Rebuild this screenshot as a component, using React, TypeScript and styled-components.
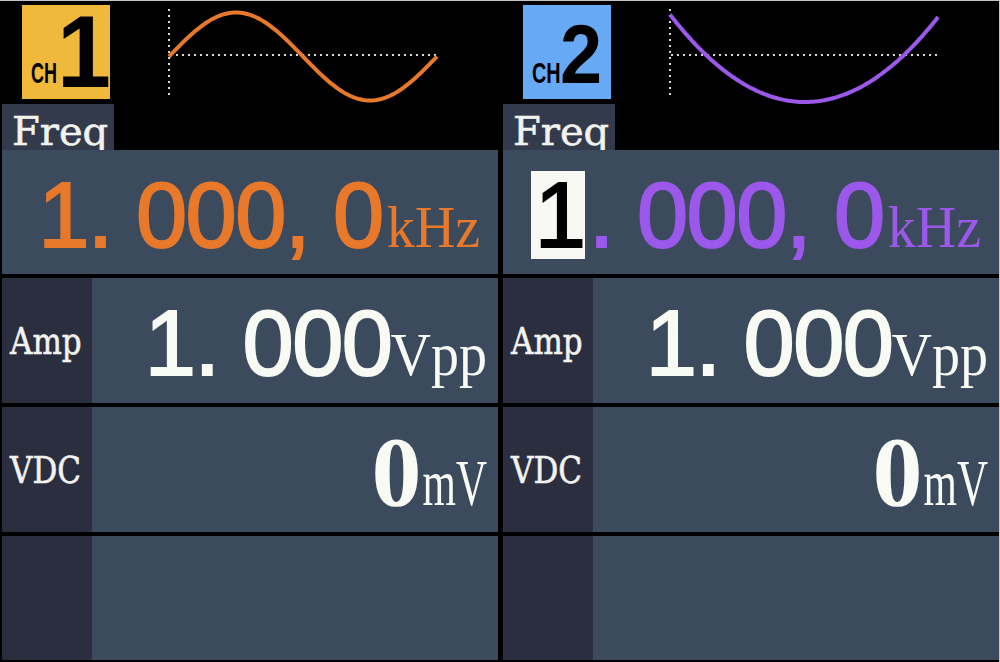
import React, { ReactElement } from 'react';
import styled, { createGlobalStyle } from 'styled-components';

const GlobalStyle = createGlobalStyle`
    html, body {
        margin: 0;
        padding: 0;
        background: #000;
    }
`;

const Screen = styled.div`
    width: 1000px;
    height: 662px;
    box-sizing: border-box;
    padding: 0 0 2px 2px;
    border-top: 1px solid #c4c4c4;
    border-right: 1px solid #c4c4c4;
    background: #000;
    display: grid;
    grid-template-columns: 496px 496px;
    column-gap: 5px;
    overflow: hidden;
`;

const Panel = styled.section`
    display: flex;
    flex-direction: column;
`;

const Header = styled.div`
    height: 103px;
    box-sizing: border-box;
    padding: 4px 0 0 20px;
    display: flex;
    align-items: flex-start;
`;

const Badge = styled.div<{ $color: string }>`
    width: 88px;
    height: 94px;
    box-sizing: border-box;
    padding-left: 9px;
    background: ${p => p.$color};
    display: flex;
    align-items: flex-end;
    color: #000;
    font-family: 'Liberation Sans', Arial, sans-serif;
    font-weight: bold;
`;

const ChText = styled.span<{ $squeeze: number }>`
    display: inline-block;
    font-size: 30px;
    line-height: 1;
    margin-bottom: 11px;
    transform: scaleX(${p => p.$squeeze});
    transform-origin: left bottom;
    margin-right: ${p => -Math.round(43 * (1 - p.$squeeze))}px;
`;

const ChNum = styled.span<{ $size: number; $drop: number; $squeeze: number }>`
    display: inline-block;
    font-size: ${p => p.$size}px;
    line-height: 0.8;
    letter-spacing: -12px;
    margin-bottom: ${p => p.$drop}px;
    transform: scaleX(${p => p.$squeeze});
    transform-origin: left bottom;
`;

const Wave = styled.svg`
    margin-left: 50px;
    margin-top: -5px;
    flex: none;
`;

const TabRow = styled.div`
    height: 46px;
`;

const Tab = styled.div`
    width: 112px;
    height: 46px;
    box-sizing: border-box;
    padding: 8px 0 0 10px;
    background: #323a4c;
    color: #f2f2ee;
    font-family: 'DejaVu Serif', serif;
    font-size: 40px;
    line-height: 38px;
    -webkit-text-stroke: 0.6px #f2f2ee;
`;

const ParamList = styled.div`
    flex: 1;
    display: grid;
    grid-template-rows: 124px 125px 125px 124px;
    row-gap: 4px;
    background: #000;
`;

const ParamRow = styled.div<{ $labelled: boolean }>`
    display: grid;
    grid-template-columns: ${p => (p.$labelled ? '90px 1fr' : '1fr')};
`;

const LabelCell = styled.div`
    background: #2a2e3e;
    display: flex;
    align-items: center;
    padding-left: 8px;
    color: #f2f2ee;
    font-family: 'DejaVu Serif', serif;
    font-size: 31px;
`;

const LabelText = styled.span`
    display: inline-block;
    transform: scaleY(1.2);
    -webkit-text-stroke: 0.5px #f2f2ee;
`;

const ValueCell = styled.div<{ $right: number; $top: number }>`
    background: #3c4a5e;
    display: flex;
    align-items: center;
    justify-content: flex-end;
    box-sizing: border-box;
    padding: ${p => p.$top}px ${p => p.$right}px 0 0;
`;

const Reading = styled.div<{ $color: string }>`
    color: ${p => p.$color};
    font-family: 'Liberation Sans', Arial, sans-serif;
    font-size: 92px;
    line-height: 1;
    letter-spacing: -1.5px;
    white-space: pre;
    -webkit-text-stroke: 2px ${p => p.$color};
`;

const SerifNum = styled.span`
    font-family: 'Liberation Serif', 'Times New Roman', serif;
    font-weight: bold;
    font-size: 100px;
    letter-spacing: 0;
    -webkit-text-stroke: 0;
`;

const Cursor = styled.span`
    display: inline-block;
    width: 50px;
    padding-left: 4px;
    margin-right: 4px;
    line-height: 88px;
    background: #f8f8f4;
    color: #000;
    -webkit-text-stroke: 2px #000;
`;

const Unit = styled.span<{ $size: number; $stretch: number; $gap: number }>`
    display: inline-block;
    font-family: 'Liberation Serif', 'Times New Roman', serif;
    font-size: ${p => p.$size}px;
    letter-spacing: 0;
    margin-left: ${p => p.$gap}px;
    transform: scaleY(${p => p.$stretch});
    transform-origin: 50% 85%;
    -webkit-text-stroke: 0;
`;

const sinePoints = Array.from({ length: 121 }, (_, i) => {
    const x = 9 + (268 * i) / 120;
    const y = 56.5 - 44 * Math.sin((2 * Math.PI * i) / 120);
    return `${x.toFixed(1)},${y.toFixed(1)}`;
}).join(' ');

const bowlPoints = Array.from({ length: 121 }, (_, i) => {
    const x = 9 + (268 * i) / 120;
    const y = 102 - 0.0048 * (x - 144) * (x - 144);
    return `${x.toFixed(1)},${y.toFixed(1)}`;
}).join(' ');

function WaveGraph({ points, color }: { points: string; color: string }): ReactElement {
    return (
        <Wave width="280" height="104" viewBox="0 0 280 104">
            <line x1="9" y1="9" x2="9" y2="99" stroke="#d8d8d8" strokeWidth="2" strokeDasharray="2 4" />
            <line x1="10" y1="55" x2="278" y2="55" stroke="#d8d8d8" strokeWidth="2" strokeDasharray="2 4" />
            <polyline points={points} fill="none" stroke={color} strokeWidth="4" strokeLinejoin="round" />
        </Wave>
    );
}

type ChannelProps = {
    num: string;
    badge: string;
    color: string;
    wave: string;
    numSize: number;
    numDrop: number;
    numSqueeze: number;
    chSqueeze: number;
    cursor?: boolean;
};

function Channel(props: ChannelProps): ReactElement {
    return (
        <Panel>
            <Header>
                <Badge $color={props.badge}>
                    <ChText $squeeze={props.chSqueeze}>CH</ChText>
                    <ChNum $size={props.numSize} $drop={props.numDrop} $squeeze={props.numSqueeze}>
                        {props.num}
                    </ChNum>
                </Badge>
                <WaveGraph points={props.wave} color={props.color} />
            </Header>
            <TabRow>
                <Tab>Freq</Tab>
            </TabRow>
            <ParamList>
                <ParamRow $labelled={false}>
                    <ValueCell $right={18} $top={6}>
                        <Reading $color={props.color}>
                            {props.cursor ? <Cursor>1</Cursor> : '1'}
                            {'. 000, 0'}
                            <Unit $size={56} $stretch={1.05} $gap={4}>kHz</Unit>
                        </Reading>
                    </ValueCell>
                </ParamRow>
                <ParamRow $labelled>
                    <LabelCell>
                        <LabelText>Amp</LabelText>
                    </LabelCell>
                    <ValueCell $right={11} $top={4}>
                        <Reading $color="#f8faf4">
                            {'1. 000'}
                            <Unit $size={56} $stretch={1.1} $gap={-1}>Vpp</Unit>
                        </Reading>
                    </ValueCell>
                </ParamRow>
                <ParamRow $labelled>
                    <LabelCell>
                        <LabelText>VDC</LabelText>
                    </LabelCell>
                    <ValueCell $right={11} $top={4}>
                        <Reading $color="#f8faf4">
                            <SerifNum>0</SerifNum>
                            <Unit $size={43} $stretch={1.5} $gap={1}>mV</Unit>
                        </Reading>
                    </ValueCell>
                </ParamRow>
                <ParamRow $labelled>
                    <LabelCell />
                    <ValueCell $right={11} $top={0} />
                </ParamRow>
            </ParamList>
        </Panel>
    );
}

export default function App(): ReactElement {
    return (
        <>
            <GlobalStyle />
            <Screen>
                <Channel
                    num="1"
                    badge="#f0b93b"
                    color="#e8782a"
                    wave={sinePoints}
                    numSize={102}
                    numDrop={5}
                    numSqueeze={0.95}
                    chSqueeze={0.6}
                />
                <Channel
                    num="2"
                    badge="#67a9f4"
                    color="#9b58ea"
                    wave={bowlPoints}
                    numSize={84}
                    numDrop={11}
                    numSqueeze={0.9}
                    chSqueeze={0.66}
                    cursor
                />
            </Screen>
        </>
    );
}
